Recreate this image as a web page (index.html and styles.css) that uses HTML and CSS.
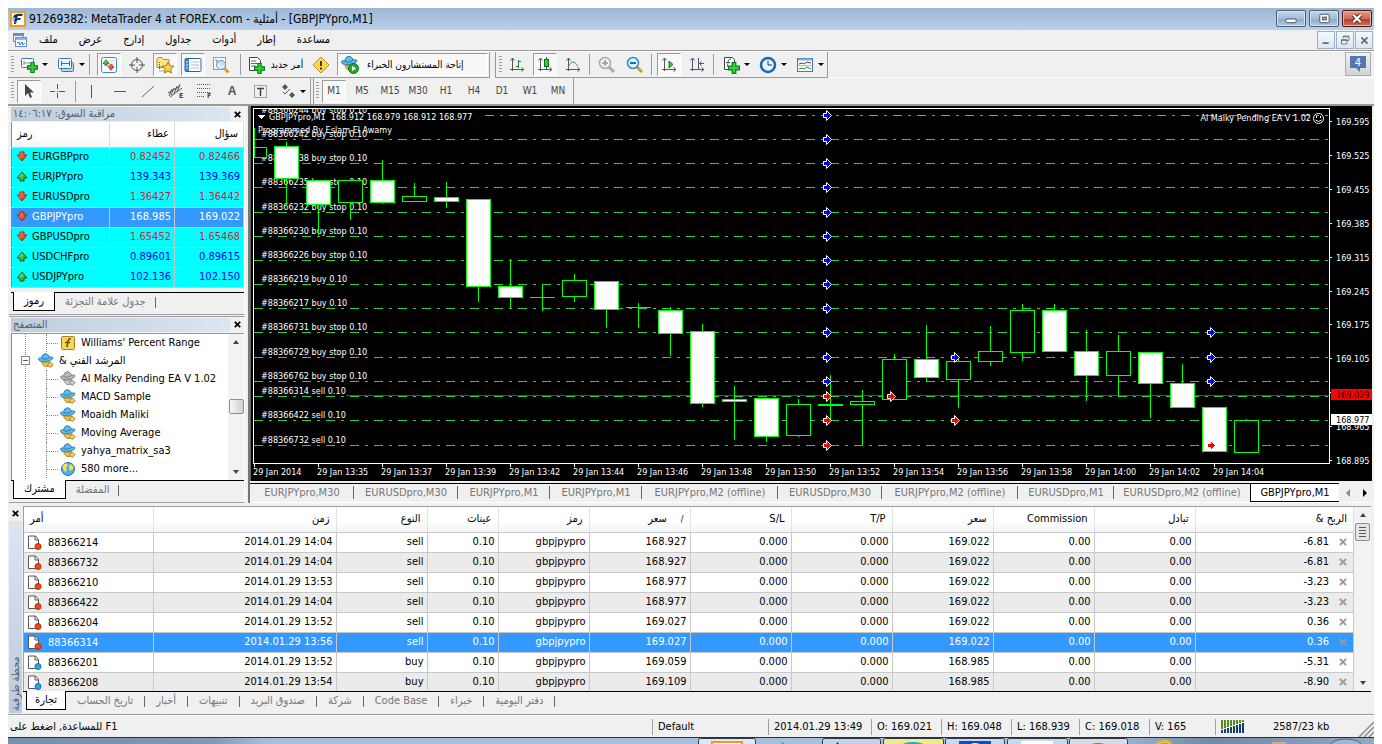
FILE: index.html
```html
<!DOCTYPE html>
<html lang="ar" dir="ltr">
<head>
<meta charset="utf-8">
<title>91269382: MetaTrader 4 at FOREX.com</title>
<link rel="stylesheet" href="styles.css">
</head>
<body>
<svg class="defs" aria-hidden="true">
  <defs>
    <linearGradient id="gRed" x1="0" y1="0" x2="1" y2="1"><stop offset="0" stop-color="#ff9a70"/><stop offset="1" stop-color="#d02000"/></linearGradient>
    <linearGradient id="gGreen" x1="0" y1="0" x2="1" y2="1"><stop offset="0" stop-color="#8cf08c"/><stop offset="1" stop-color="#109a20"/></linearGradient>
  </defs>
  <symbol id="down" viewBox="0 0 12 11"><path d="M4 1h4v3h3L6 10 1 4h3z" fill="url(#gRed)" stroke="#a02810"/></symbol>
  <symbol id="up" viewBox="0 0 12 11"><path d="M4 10h4V7h3L6 1 1 7h3z" fill="url(#gGreen)" stroke="#106018"/></symbol>
  <symbol id="hat" viewBox="0 0 17 16"><path d="M4 5c0-6 7-6 8-1 4-1 5 1 3 2-3 3-10 3-13 2C-1 6 1 4 4 5z" fill="#5cbcec" stroke="#2777a8"/><path d="M4 5c2 2 6 1 8-1" fill="none" stroke="#256f9e"/><path d="M4 9c1 5 5 6 8 4V8.500c-3 1-5 1-8 .5z" fill="#e6c25c" stroke="#a88020"/><path d="M13 9l3 3-3 3-3-3z" fill="#f6cf55" stroke="#a07a18"/></symbol>
  <symbol id="hatgray" viewBox="0 0 17 16"><path d="M4 5c0-6 7-6 8-1 4-1 5 1 3 2-3 3-10 3-13 2C-1 6 1 4 4 5z" fill="#bbb" stroke="#777"/><path d="M4 5c2 2 6 1 8-1" fill="none" stroke="#777"/><path d="M4 9c1 5 5 6 8 4V8.500c-3 1-5 1-8 .5z" fill="#ccc" stroke="#888"/><path d="M13 9l3 3-3 3-3-3z" fill="#ccc" stroke="#777"/></symbol>
  <symbol id="docred" viewBox="0 0 15 15"><path d="M1.500 1h7l3 3.500v9h-10z" fill="#fff" stroke="#555"/><path d="M8 1v4h4" fill="none" stroke="#555"/><circle cx="11" cy="11.500" r="3" fill="#ee4a18" stroke="#b52c08"/></symbol>
  <symbol id="docblue" viewBox="0 0 15 15"><path d="M1.500 1h7l3 3.500v9h-10z" fill="#fff" stroke="#555"/><path d="M8 1v4h4" fill="none" stroke="#555"/><circle cx="11" cy="11.500" r="3" fill="#28a4e8" stroke="#1070b0"/></symbol>
  <symbol id="plus" viewBox="0 0 10 10"><path d="M3.500.5h3v3h3v3h-3v3h-3v-3h-3v-3h3z" fill="#2fd53a" stroke="#0b7d18"/></symbol>
  <symbol id="axes" viewBox="0 0 16 16"><path d="M3.500 1.500V14M1.500 3.500l2-2.500 2 2.500M1 12.500h13M12.500 10.500l2.500 2-2.500 2" fill="none" stroke="#555"/></symbol>
  <symbol id="cross" viewBox="0 0 9 9"><path d="M1 1l7 7M8 1L1 8" stroke="currentColor" stroke-width="2.200"/></symbol>
</svg>
<div class="window">
  <header class="titlebar">
    <svg class="i16" viewBox="0 0 16 16"><rect x="1" y="1" width="14" height="14" fill="#fff" stroke="#f79a1c" stroke-width="2"/><path d="M3 6c1-3 4-4 10-3l-1 2H8L7 7h4l-1 2H7l-1 4H4c0-3 0-4 1-6z" fill="#12365f"/><path d="M3 6c0 3 1 5 3 6" stroke="#6c8fb5" fill="none"/></svg>
    <h1>91269382: MetaTrader 4 at FOREX.com - أمثلية - [GBPJPYpro,M1]</h1>
    <div class="winbtns">
      <button aria-label="Minimize"><svg viewBox="0 0 30 16"><rect x="9.500" y="8.500" width="11" height="4" rx="1" fill="#fff" stroke="#444b58"/></svg></button>
      <button aria-label="Restore"><svg viewBox="0 0 30 16"><rect x="10.500" y="3.500" width="10" height="9" rx="1" fill="#fff" stroke="#444b58"/><rect x="13.500" y="6.500" width="4" height="3" fill="#8fb0d4" stroke="#444b58"/></svg></button>
      <button class="close" aria-label="Close"><svg viewBox="0 0 30 16"><path d="M11 4l8 8m0-8l-8 8" stroke="#4d2525" stroke-width="4.500"/><path d="M11 4l8 8m0-8l-8 8" stroke="#fff" stroke-width="2.500"/></svg></button>
    </div>
  </header>

  <nav class="menubar">
    <svg class="i16" viewBox="0 0 16 16"><rect x="1.500" y="1.500" width="10" height="8" fill="#fff" stroke="#5b93d8"/><path d="M2 3h9" stroke="#5b93d8" stroke-width="2"/><rect x="3.500" y="5.500" width="11" height="9" fill="#fff" stroke="#5b93d8"/><path d="M4 7h10" stroke="#8bb8ee" stroke-width="2"/><path d="M5 11l2-1 1 3 2-3 1 3 2-2" fill="none" stroke="#3a76c4"/></svg>
    <button>ملف</button><button>عرض</button><button>إدارج</button><button>جداول</button><button>أدوات</button><button>إطار</button><button>مساعدة</button>
    <div class="mdibtns">
      <button aria-label="Minimize chart"><svg viewBox="0 0 18 18"><path d="M5 12.500h7" stroke="#5f7186" stroke-width="2"/></svg></button>
      <button aria-label="Restore chart"><svg viewBox="0 0 18 18"><path d="M7 7V4.500h6.500v5H11M7 5.500h6" fill="none" stroke="#5f7186"/><path d="M5 8.500h6v5H5zM5 9.500h6" fill="none" stroke="#5f7186"/></svg></button>
      <button aria-label="Close chart"><svg viewBox="0 0 18 18"><path d="M6 6l7 7m0-7l-7 7" stroke="#5f7186" stroke-width="2"/></svg></button>
    </div>
  </nav>

  <div class="toolbar">
    <div class="tools">
      <span class="grip"></span>
      <button class="drop" aria-label="New chart"><svg class="i18" viewBox="0 0 18 18"><rect x="1.500" y="2.500" width="12" height="9" rx="1" fill="#fff" stroke="#3679ae"/><path d="M4 5v4M4 7h7" stroke="#888"/><use href="#plus" x="7" y="6" width="11" height="11"/></svg><i class="caret"></i></button>
      <button class="drop" aria-label="Profiles"><svg class="i18" viewBox="0 0 18 18"><rect x="4.500" y="6.500" width="12" height="9" rx="1" fill="#b9d8f0" stroke="#3679ae"/><rect x="1.500" y="2.500" width="13" height="10" rx="1" fill="#e8f4ff" stroke="#3679ae"/><path d="M4.500 5v5M12.500 5v5M4 7.500h8" stroke="#666"/></svg><i class="caret"></i></button>
      <span class="sep first"></span>
      <button class="on" aria-label="Market watch"><svg class="i16" viewBox="0 0 16 16"><rect x=".5" y=".5" width="15" height="15" rx="2" fill="#fff" stroke="#3a86d0"/><path d="M9 4h5M9 7h5" stroke="#ccc"/><use href="#up" x="1" y="2" width="8" height="7"/><use href="#down" x="6" y="7" width="8" height="7"/></svg></button>
      <button aria-label="Data window"><svg class="i16" viewBox="0 0 16 16"><circle cx="8" cy="8" r="5.500" fill="none" stroke="#555"/><path d="M8 0v6M8 10v6M0 8h6M10 8h6" stroke="#555"/></svg></button>
      <button class="on" aria-label="Navigator"><svg class="i18" viewBox="0 0 18 18"><path d="M1 2.500l1-1h4l1.500 2H13v8H1z" fill="#ffe48a" stroke="#b98e18"/><path d="M3.500 6v8m0-3h5m-5 4h5" stroke="#555" stroke-dasharray="1 1"/><path d="M12 6l1.800 3.600 4 .6-3 2.800.7 4-3.500-2-3.500 2 .7-4-3-2.800 4-.6z" fill="#ffd24a" stroke="#a37710"/></svg></button>
      <button class="on" aria-label="Terminal"><svg class="i18" viewBox="0 0 18 18"><rect x="1" y="2.500" width="16" height="13" rx="1" fill="#fff" stroke="#2468a8"/><rect x="1" y="3" width="4" height="12" fill="#377fd0"/><path d="M7 6h8M7 9h8M7 12h8" stroke="#b4bcc8"/><path d="M2 6h2M2 9h2M2 12h2" stroke="#fff"/></svg></button>
      <button aria-label="Strategy tester"><svg class="i18" viewBox="0 0 18 18"><rect x="1.500" y="1.500" width="12" height="12" fill="#fff" stroke="#9a9a9a"/><path d="M3 4h2v3h2V5h2v4h2V5" fill="none" stroke="#777"/><circle cx="9" cy="9" r="4.500" fill="#cfe9fb" fill-opacity=".8" stroke="#5a9bc8"/><path d="M12.500 12.500l4 4" stroke="#d8a320" stroke-width="3"/></svg></button>
      <span class="sep"></span>
      <button class="order"><svg class="i18" viewBox="0 0 18 18"><path d="M2.500 1.500h8l3 3v10h-11z" fill="#fff" stroke="#444"/><path d="M4 5h5M4 7.500h7M4 10h5" stroke="#666"/><use href="#plus" x="7" y="7" width="11" height="11"/></svg><span>أمر جديد</span></button>
      <button aria-label="MetaEditor"><svg class="i18" viewBox="0 0 18 18"><path d="M9 1l8 8-8 8-8-8z" fill="#ffd94a" stroke="#c29312"/><path d="M9 5v5M9 11.500v2" stroke="#443a10" stroke-width="2"/></svg></button>
      <button class="on experts"><svg class="i18" viewBox="0 0 18 18"><use href="#hat" x="0" y="0" width="17" height="16"/><circle cx="12.500" cy="12.500" r="5" fill="#29a736" stroke="#116d1c"/><path d="M11 10l4 2.500-4 2.500z" fill="#fff"/></svg><span dir="rtl">إتاحة المستشارون الخبراء</span></button>
    </div>
    <div class="tools charts">
      <span class="grip"></span>
      <button aria-label="Bar chart"><svg class="i16" viewBox="0 0 16 16"><use href="#axes" width="16" height="16"/><path d="M9.500 3v8M9 4.500h3M7 9.500h2.500" stroke="#1d8c24" fill="none"/></svg></button>
      <button class="on" aria-label="Candlesticks"><svg class="i16" viewBox="0 0 16 16"><use href="#axes" width="16" height="16"/><path d="M9.500 0v12" stroke="#0b6c14"/><rect x="7.500" y="2.500" width="4" height="7" fill="#2ed33a" stroke="#0b6c14"/></svg></button>
      <button aria-label="Line chart"><svg class="i16" viewBox="0 0 16 16"><use href="#axes" width="16" height="16"/><path d="M3 10c4-7 6-6 10-1" stroke="#2f9c38" fill="none"/></svg></button>
      <span class="sep"></span>
      <button aria-label="Zoom in"><svg class="i18" viewBox="0 0 18 18"><path d="M11 11l5 5" stroke="#aaa" stroke-width="3"/><circle cx="7" cy="7" r="5.500" fill="#f2f2f2" stroke="#aaa" stroke-width="1.500"/><path d="M4 7h6M7 4v6" stroke="#999" stroke-width="1.500"/></svg></button>
      <button aria-label="Zoom out"><svg class="i18" viewBox="0 0 18 18"><path d="M11 11l5 5" stroke="#caa224" stroke-width="3"/><circle cx="7" cy="7" r="5.500" fill="#dff3ff" stroke="#2a8ad0" stroke-width="1.500"/><path d="M4 7h6" stroke="#1b6fae" stroke-width="2"/></svg></button>
      <span class="sep"></span>
      <button class="on" aria-label="Auto scroll"><svg class="i16" viewBox="0 0 16 16"><use href="#axes" width="16" height="16"/><path d="M8 4l4 3.500-4 3.500z" fill="#35c83f" stroke="#0f7d1a"/></svg></button>
      <button aria-label="Chart shift"><svg class="i16" viewBox="0 0 16 16"><use href="#axes" width="16" height="16"/><path d="M9.500 1v12" stroke="#1c5fae"/><path d="M15 6.500h-5M12.500 4.500l-2 2 2 2" stroke="#c03a10" fill="none"/></svg></button>
      <span class="sep"></span>
      <button class="drop" aria-label="Indicators"><svg class="i18" viewBox="0 0 18 18"><path d="M2.500 1.500h8l2 2v10h-10z" fill="#fff" stroke="#444"/><path d="M9 3C5 3 7 6 5 11M4 6.500h4" stroke="#555" fill="none"/><use href="#plus" x="6" y="6" width="12" height="12"/></svg><i class="caret"></i></button>
      <button class="drop" aria-label="Periods"><svg class="i18" viewBox="0 0 18 18"><circle cx="9" cy="9" r="7" fill="#eaf5ff" stroke="#1c66b8" stroke-width="2.500"/><path d="M9 4.500V9h4" stroke="#333" fill="none"/></svg><i class="caret"></i></button>
      <button class="drop" aria-label="Templates"><svg class="i18" viewBox="0 0 18 18"><rect x="1.500" y="2.500" width="15" height="13" fill="#fff" stroke="#3a7cb8"/><path d="M2 3.500h14" stroke="#6fb3ee" stroke-width="2"/><path d="M3 8l3-1 2 1 3-2 4 1" stroke="#8a2d14" fill="none"/><path d="M2 9.500h14" stroke="#bbb"/><path d="M3 13l3-1 2 1 3-2 4 2" stroke="#268a32" fill="none"/></svg><i class="caret"></i></button>
    </div>
    <button class="chat" aria-label="4 messages"><svg viewBox="0 0 20 18"><path d="M2 1h16v12h-6v4l-4-4H2z" fill="#5477ad"/><text x="10" y="11" text-anchor="middle" class="chatnum">4</text></svg></button>
  </div>

  <div class="toolbar second">
    <div class="tools">
      <span class="grip"></span>
      <button class="on" aria-label="Cursor"><svg class="i16" viewBox="0 0 16 16"><path d="M4 1v12l3-3 2 5 2-1-2-4.500h4z" fill="#444"/></svg></button>
      <button aria-label="Crosshair"><svg class="i16" viewBox="0 0 16 16"><path d="M8.500 1v5M8.500 10v5M1 8.500h5M10 8.500h6M8 8.500h1" stroke="#555"/></svg></button>
      <span class="sep"></span>
      <button aria-label="Vertical line"><svg class="i16" viewBox="0 0 16 16"><path d="M7.500 2v13" stroke="#555"/></svg></button>
      <button aria-label="Horizontal line"><svg class="i16" viewBox="0 0 16 16"><path d="M2 8.500h12" stroke="#555"/></svg></button>
      <button aria-label="Trendline"><svg class="i16" viewBox="0 0 16 16"><path d="M2 14L14 3" stroke="#666"/></svg></button>
      <button aria-label="Channel"><svg class="i18" viewBox="0 0 18 18"><path d="M1 11L13 4M3 15L15 6M4 13l3-7M7 12l3-8M10 10l3-8M2 14l3-7" stroke="#555"/><text x="12" y="16" class="mini">E</text></svg></button>
      <button aria-label="Fibonacci"><svg class="i18" viewBox="0 0 18 18"><path d="M2 2.500h13M2 6.500h13M2 10.500h13M2 14.500h8" stroke="#555" stroke-dasharray="1 1"/><text x="12" y="16" class="mini">F</text></svg></button>
      <button class="letter" aria-label="Text">A</button>
      <button aria-label="Text label"><svg class="i16" viewBox="0 0 16 16"><rect x="2.500" y="2.500" width="12" height="12" fill="none" stroke="#555" stroke-dasharray="1 1"/><path d="M5 5.500h7M8.500 5v8" stroke="#444" stroke-width="1.500"/></svg></button>
      <button class="drop" aria-label="Arrows"><svg class="i16" viewBox="0 0 16 16"><path d="M5 1l3 3-3 3-3-3zM12 9l3 3-3 3-3-3z" fill="#555"/><path d="M3 9l2 2 5-5" stroke="#555" fill="none"/></svg><i class="caret"></i></button>
    </div>
    <div class="tools periods">
      <span class="grip"></span>
      <button class="on">M1</button><button>M5</button><button>M15</button><button>M30</button><button>H1</button><button>H4</button><button>D1</button><button>W1</button><button>MN</button>
    </div>
  </div>

  <main class="work">
    <aside class="side">
      <section class="panel">
        <div class="phead"><h2 dir="rtl">مراقبة السوق: ١٤:٠٦:١٧</h2><button aria-label="Close market watch"><svg><use href="#cross"/></svg></button></div>
        <table class="watch">
          <thead><tr><th>رمز</th><th>عطاء</th><th>سؤال</th></tr></thead>
          <tbody>
            <tr class="dn"><td><svg><use href="#down"/></svg>EURGBPpro</td><td>0.82452</td><td>0.82466</td></tr>
            <tr class="upr"><td><svg><use href="#up"/></svg>EURJPYpro</td><td>139.343</td><td>139.369</td></tr>
            <tr class="dn"><td><svg><use href="#down"/></svg>EURUSDpro</td><td>1.36427</td><td>1.36442</td></tr>
            <tr class="sel"><td><svg><use href="#down"/></svg>GBPJPYpro</td><td>168.985</td><td>169.022</td></tr>
            <tr class="dn"><td><svg><use href="#down"/></svg>GBPUSDpro</td><td>1.65452</td><td>1.65468</td></tr>
            <tr class="upr"><td><svg><use href="#up"/></svg>USDCHFpro</td><td>0.89601</td><td>0.89615</td></tr>
            <tr class="upr"><td><svg><use href="#up"/></svg>USDJPYpro</td><td>102.136</td><td>102.150</td></tr>
          </tbody>
        </table>
        <div class="tabs"><button class="cur">رموز</button><button>جدول علامة التجزئة</button></div>
      </section>
      <section class="panel nav">
        <div class="phead"><h2>المتصفح</h2><button aria-label="Close navigator"><svg><use href="#cross"/></svg></button></div>
        <div class="treebox">
          <ul class="tree">
            <li><svg class="i16" viewBox="0 0 16 16"><rect x="1.500" y="1.500" width="13" height="13" rx="1" fill="#f7d558" stroke="#a8801c"/><path d="M11 4c-3-1-3 2-4 8M5 7.500h5" stroke="#6b4d08" stroke-width="1.500" fill="none"/></svg>Williams' Percent Range</li>
            <li class="root"><i class="minus"></i><svg class="i16"><use href="#hat"/></svg><span dir="rtl">المرشد الفني &amp;</span></li>
            <li><svg class="i16"><use href="#hatgray"/></svg>Al Malky Pending EA V 1.02</li>
            <li><svg class="i16"><use href="#hat"/></svg>MACD Sample</li>
            <li><svg class="i16"><use href="#hat"/></svg>Moaidh Maliki</li>
            <li><svg class="i16"><use href="#hat"/></svg>Moving Average</li>
            <li><svg class="i16"><use href="#hat"/></svg>yahya_matrix_sa3</li>
            <li><svg class="i16" viewBox="0 0 16 16"><circle cx="8" cy="8" r="6.500" fill="#4fb0ee" stroke="#2a6cae"/><path d="M3 4c2-2 4-2 5 0l-2 3 1 2-2 2C3 9 2 6 3 4zM10 3l3 2v3l-3 2-1-3z" fill="#f4e252"/></svg>580 more...</li>
          </ul>
          <div class="scroll"><i class="su"></i><b></b><i class="sd"></i></div>
        </div>
        <div class="tabs"><button class="cur">مشترك</button><button>المفضلة</button></div>
      </section>
    </aside>
    <section class="chartpane">
      <svg id="chart" viewBox="250 106 1122 375" role="img" aria-label="GBPJPYpro,M1"></svg>
      <div class="charttabs">
        <button>EURJPYpro,M30</button><button>EURUSDpro,M30</button><button>EURJPYpro,M1</button><button>EURJPYpro,M1</button><button>EURJPYpro,M2 (offline)</button><button>EURUSDpro,M30</button><button>EURJPYpro,M2 (offline)</button><button>EURUSDpro,M1</button><button>EURUSDpro,M2 (offline)</button><button class="cur">GBPJPYpro,M1</button>
        <div class="tabnav"><i class="tl"></i><i class="tr"></i></div>
      </div>
    </section>
  </main>

  <section class="terminal">
    <div class="gutter"><button aria-label="Close terminal"><svg><use href="#cross"/></svg></button><h2>محطة طرفية</h2></div>
    <div class="termbody">
      <div class="orderbox">
        <table class="orders">
          <colgroup><col class="c1"><col class="c2"><col class="c3"><col class="c4"><col class="c3"><col class="c5"><col class="c5"><col class="c5"><col class="c5"><col class="c5"><col class="c5"><col></colgroup>
          <thead><tr><th>أمر</th><th>زمن</th><th>النوع</th><th>عينات</th><th>رمز</th><th class="sorted">سعر<span>/</span></th><th>S/L</th><th>T/P</th><th>سعر</th><th>Commission</th><th>تبادل</th><th dir="rtl">الربح &amp;</th></tr></thead>
          <tbody>
            <tr><td><svg><use href="#docred"/></svg>88366214</td><td>2014.01.29 14:04</td><td>sell</td><td>0.10</td><td>gbpjpypro</td><td>168.927</td><td>0.000</td><td>0.000</td><td>169.022</td><td>0.00</td><td>0.00</td><td>-6.81<button aria-label="Close order"><svg><use href="#cross"/></svg></button></td></tr>
            <tr><td><svg><use href="#docred"/></svg>88366732</td><td>2014.01.29 14:04</td><td>sell</td><td>0.10</td><td>gbpjpypro</td><td>168.927</td><td>0.000</td><td>0.000</td><td>169.022</td><td>0.00</td><td>0.00</td><td>-6.81<button aria-label="Close order"><svg><use href="#cross"/></svg></button></td></tr>
            <tr><td><svg><use href="#docred"/></svg>88366210</td><td>2014.01.29 13:53</td><td>sell</td><td>0.10</td><td>gbpjpypro</td><td>168.977</td><td>0.000</td><td>0.000</td><td>169.022</td><td>0.00</td><td>0.00</td><td>-3.23<button aria-label="Close order"><svg><use href="#cross"/></svg></button></td></tr>
            <tr><td><svg><use href="#docred"/></svg>88366422</td><td>2014.01.29 14:04</td><td>sell</td><td>0.10</td><td>gbpjpypro</td><td>168.977</td><td>0.000</td><td>0.000</td><td>169.022</td><td>0.00</td><td>0.00</td><td>-3.23<button aria-label="Close order"><svg><use href="#cross"/></svg></button></td></tr>
            <tr><td><svg><use href="#docred"/></svg>88366204</td><td>2014.01.29 13:52</td><td>sell</td><td>0.10</td><td>gbpjpypro</td><td>169.027</td><td>0.000</td><td>0.000</td><td>169.022</td><td>0.00</td><td>0.00</td><td>0.36<button aria-label="Close order"><svg><use href="#cross"/></svg></button></td></tr>
            <tr class="sel"><td><svg><use href="#docred"/></svg>88366314</td><td>2014.01.29 13:56</td><td>sell</td><td>0.10</td><td>gbpjpypro</td><td>169.027</td><td>0.000</td><td>0.000</td><td>169.022</td><td>0.00</td><td>0.00</td><td>0.36<button aria-label="Close order"><svg><use href="#cross"/></svg></button></td></tr>
            <tr><td><svg><use href="#docblue"/></svg>88366201</td><td>2014.01.29 13:52</td><td>buy</td><td>0.10</td><td>gbpjpypro</td><td>169.059</td><td>0.000</td><td>0.000</td><td>168.985</td><td>0.00</td><td>0.00</td><td>-5.31<button aria-label="Close order"><svg><use href="#cross"/></svg></button></td></tr>
            <tr><td><svg><use href="#docblue"/></svg>88366208</td><td>2014.01.29 13:54</td><td>buy</td><td>0.10</td><td>gbpjpypro</td><td>169.109</td><td>0.000</td><td>0.000</td><td>168.985</td><td>0.00</td><td>0.00</td><td>-8.90<button aria-label="Close order"><svg><use href="#cross"/></svg></button></td></tr>
          </tbody>
        </table>
        <div class="scroll wide"><i class="su"></i><b class="lined"></b><i class="sd"></i></div>
      </div>
      <div class="tabs"><button class="cur">تجارة</button><button>تاريخ الحساب</button><button>أخبار</button><button>تنبيهات</button><button>صندوق البريد</button><button>شركة</button><button>Code Base</button><button>خبراء</button><button>دفتر اليومية</button></div>
    </div>
  </section>

  <footer class="status">
    <span class="help" dir="rtl">F1 للمساعدة, اضغط على</span>
    <span class="s-prof">Default</span><span class="s-time">2014.01.29 13:49</span><span class="s-o">O: 169.021</span><span class="s-o">H: 169.048</span><span class="s-l">L: 168.939</span><span class="s-o">C: 169.018</span><span class="s-v">V: 165</span>
    <span class="s-net"><svg viewBox="0 0 24 13"><path d="M1 0v9M4 0v8M7 0v7M10 0v6M13 0v5M16 0v4M19 0v3M22 0v2" stroke="#5a8a1c" stroke-width="2"/><path d="M1 10v3M4 9v4M7 8v5M10 7v6M13 6v7M16 5v8M19 4v9M22 3v10" stroke="#12406a" stroke-width="2"/></svg>2587/23 kb</span>
    <svg class="size" viewBox="0 0 16 18"><path d="M1 18L16 3M6 18l10-10M11 18l5-5" stroke="#8c8c8c" stroke-width="1.500"/></svg>
  </footer>
</div>

<div class="taskbar">
  <svg viewBox="0 0 1366 7" preserveAspectRatio="xMinYMin meet" aria-hidden="true">
    <g stroke="#303c4c" fill="#dfe7f0"><rect x="690.500" y=".5" width="57" height="9" rx="2"/><rect x="814.500" y=".5" width="58" height="9" rx="2" fill="#c4d3e6"/><rect x="875.500" y=".5" width="60" height="9" rx="2" fill="#f2ea86"/><rect x="937.500" y=".5" width="59" height="9" rx="2" fill="#c9d8ea"/><rect x="999.500" y=".5" width="60" height="9" rx="2" fill="#c9d8ea"/><rect x="1061.500" y=".5" width="58" height="9" rx="2" fill="#d3dde9"/></g>
    <rect x="704" y="4" width="30" height="6" fill="#fff" stroke="#f79a1c" stroke-width="2"/>
    <path d="M773 4l6 3h-4z" fill="#2b8fc0"/><path d="M827 7l3-3 1 3z" fill="#223"/>
    <ellipse cx="905" cy="8" rx="12" ry="4" fill="#25a7dc"/><rect x="951" y="3" width="32" height="5" fill="#0b4fc4"/><ellipse cx="967" cy="8" rx="6" ry="3" fill="#eef4ff"/>
    <rect x="1013" y="3" width="32" height="5" fill="#fff"/><ellipse cx="1090" cy="9" rx="10" ry="4" fill="#e04a42"/><path d="M1148 7c4-4 12-5 15-1" stroke="#e8be28" stroke-width="3" fill="none"/>
    <rect x="1264" y="4" width="14" height="4" fill="#c6b27a"/><ellipse cx="1338" cy="8" rx="16" ry="7" fill="#9fb6d2" stroke="#4c6585"/>
  </svg>
</div>
<script src="chart.js"></script>
</body>
</html>
```

FILE: styles.css
```css
* { box-sizing: border-box; }
body {
  margin: 0; padding: 8px 8px 0; min-height: 100vh; background: #fff; color: #000;
  font: 11px/14px "DejaVu Sans Condensed", "DejaVu Sans", "Noto Sans", sans-serif;
  display: flex; flex-direction: column; overflow: hidden;
}
button { font: inherit; color: inherit; background: none; border: 0; padding: 0; margin: 0; }
h1, h2 { margin: 0; font: inherit; }
ul { margin: 0; padding: 0; list-style: none; }
svg { display: block; flex: none; }
.defs { position: absolute; width: 0; height: 0; }
.i16 { width: 16px; height: 16px; }
.i18 { width: 18px; height: 18px; }
.window { background: #f0f0f0; }

.titlebar { height: 22px; display: flex; align-items: center; padding: 0 2px; background: linear-gradient(#9db8d5, #b9d0eb); }
.titlebar h1 { margin-left: 3px; font-size: 12px; flex: 1; }
.winbtns { display: flex; gap: 3px; align-self: flex-start; padding-top: 2px; }
.winbtns button { width: 30px; height: 17px; border: 1px solid #4c5f78; border-radius: 2px; background: linear-gradient(#c4d6ea, #a5bdd9 50%, #8ba9ca 52%, #b3cae4); box-shadow: inset 0 0 0 1px #d3e1f1; }
.winbtns .close { border-color: #4d1710; background: linear-gradient(#e0a090, #cf6b56 50%, #b93a24 52%, #d0705a); box-shadow: inset 0 0 0 1px #e9b3a8; }
.winbtns svg { width: 28px; height: 15px; }

.menubar { height: 21px; display: flex; align-items: center; padding: 0 1px 0 4px; border-bottom: 1px solid #9a9a9a; }
.menubar > button { margin-left: 21px; }
.menubar > svg + button { margin-left: 11px; }
.mdibtns { margin-left: auto; display: flex; gap: 1px; }
.mdibtns button { width: 18px; height: 18px; border: 1px solid #9fb0c4; background: linear-gradient(#f4f8fc, #dce7f3); }
.mdibtns svg { width: 16px; height: 16px; }

.toolbar { display: flex; height: 26px; border-top: 1px solid #fff; }
.tools { display: flex; align-items: center; height: 26px; padding: 0 1px; border-right: 1px solid #9a9a9a; border-bottom: 1px solid #9a9a9a; gap: 4px; }
.tools + .tools { margin-left: 5px; border-left: 1px solid #9a9a9a; }
.grip { width: 3px; height: 18px; margin: 0 -1px 0 2px; background: repeating-linear-gradient(#a0a0a0 0 1px, #f0f0f0 1px 3px); }
.sep { width: 1px; height: 21px; background: #9a9a9a; margin: 0 0 0 3px; }
.sep.first { margin: 0 3px 0 -2px; }
.charts .sep { margin: 0 1px 0 0; }
.second .sep { margin: 0 0 0 2px; }
.tools button { width: 24px; height: 23px; display: flex; align-items: center; justify-content: center; }
.tools .on { background: #f8f8f8; border: 1px solid #fff; border-top-color: #9a9a9a; border-left-color: #9a9a9a; }
.tools .drop { width: 33px; gap: 4px; }
.caret { border: 3px solid transparent; border-top-color: #000; border-bottom: 0; width: 0; height: 0; flex: none; }
.tools .order { width: 60px; gap: 6px; font-size: 10px; white-space: nowrap; }
.tools .experts { width: 151px; gap: 8px; justify-content: flex-start; padding-left: 3px; font-size: 10px; white-space: nowrap; }
.chat { margin: 0 3px 0 auto; width: 26px; height: 24px; border: 1px solid #adadad; background: linear-gradient(#f2f2f2, #d2d2d2); padding: 2px; }
.chat svg { width: 20px; height: 18px; }
.chatnum { font-size: 11px; fill: #fff; }
.second { height: 29px; border-bottom: 2px solid #9a9a9a; border-top: 1px solid #fff; }
.second .tools { height: 26px; border-bottom: 0; }
.mini { font-size: 7px; font-weight: bold; fill: #444; }
.letter { font: bold 12px/14px "Liberation Sans", sans-serif; color: #555; }
.periods { font-size: 10px; color: #444; }
.tools + .periods { margin-left: 2px; padding-right: 3px; }
.tools.periods .grip { margin-left: 1px; }

.work { display: flex; align-items: stretch; }
.side { width: 242px; flex: none; padding: 0 3px 0 1px; display: flex; flex-direction: column; gap: 1px; border-right: 2px solid #777; }
.panel { display: flex; flex-direction: column; padding-left: 2px; border-right: 1px solid #fff; border-bottom: 1px solid #a0a0a0; }
.nav { flex: 1; border-top: 1px solid #a0a0a0; }
.phead { display: flex; align-items: center; height: 16px; }
.phead h2 { flex: 1; text-align: left; padding-left: 2px; color: #54606c; background: linear-gradient(90deg, #bfcddb, #dae6f2); }
.phead button, .gutter button { width: 14px; display: grid; place-items: center; }
.phead button svg, .gutter button svg { width: 7px; height: 7px; }
.watch { border-collapse: collapse; width: 100%; table-layout: fixed; border-left: 1px solid #888; }
.watch th { height: 25px; background: linear-gradient(#fff 55%, #f1f3f5); border: 0; border-right: 1px solid #ddd; border-bottom: 1px solid #ccc; text-align: right; padding: 0 5px; font-weight: normal; }
.watch th:first-child { text-align: left; width: 98px; }
.watch th:last-child { width: 69px; }
.watch td { height: 20px; padding: 0 3px; text-align: right; background: #0ff; border-right: 1px solid #c0c8c8; border-bottom: 1px solid #c0c8c8; }
.watch td:first-child { text-align: left; padding-left: 4px; }
.watch td svg { display: inline-block; width: 12px; height: 11px; margin-right: 4px; vertical-align: -2px; }
.dn td + td { color: #e0103c; }
.upr td + td { color: #0000f0; }
.watch .sel td { background: #39f; color: #fff; }
.tabs { display: flex; align-items: flex-start; border-top: 1px solid #000; height: 22px; padding-left: 2px; color: #777; }
.watch + .tabs { margin-top: 4px; }
.tabs button { height: 18px; padding: 0 10px; white-space: nowrap; background: linear-gradient(#666, #666) right 4px / 1px 11px no-repeat; }
.tabs .cur { margin-top: -1px; height: 19px; background: #fff; color: #000; border: 1px solid #000; border-top: 0; }
.termbody .tabs { padding-left: 3px; }
.termbody .tabs button { padding: 0 12px 0 11px; }
.termbody .tabs .cur { padding: 0 8px; }
.treebox { display: flex; flex: 1; background: #fff; border-top: 1px solid #999; border-left: 1px solid #888; }
.tree { flex: 1; padding: 0 0 2px 14px; background: repeating-linear-gradient(#888 0 1px, #fff 1px 2px) 13px 0 / 1px 100% no-repeat; }
.tree li { height: 18px; display: flex; align-items: center; gap: 5px; padding-left: 20px; white-space: nowrap; }
.tree li::before { content: ""; width: 12px; height: 18px; margin-right: -4px; border-left: 1px dotted #888; background: repeating-linear-gradient(90deg, #888 0 1px, #fff 1px 2px) 0 9px / 12px 1px no-repeat; }
.tree .root { padding-left: 0; gap: 5px; }
.tree .root::before { display: none; }
.minus { width: 9px; height: 9px; margin-left: -5px; margin-right: 3px; border: 1px solid #888; background: linear-gradient(#36c, #36c) center / 5px 1px no-repeat #fff; }
.scroll { width: 16px; display: flex; flex-direction: column; align-items: center; justify-content: space-between; padding: 6px 0; background: #f2f2f2; }
.scroll i { border: 3px solid transparent; width: 0; height: 0; }
.scroll .su { border-bottom: 4px solid #444; border-top: 0; }
.scroll .sd { border-top: 4px solid #444; border-bottom: 0; }
.scroll b { width: 15px; height: 15px; border: 1px solid #8f8f8f; border-radius: 2px; background: linear-gradient(90deg, #f6f6f6, #d0d0d0); }
.scroll.wide { width: 17px; justify-content: flex-start; }
.wide b { height: 18px; margin-top: 6px; }
.wide .sd { margin-top: auto; }
.scroll.wide .lined { background: repeating-linear-gradient(#555 0 1px, #e4e4e4 1px 3px) center / 7px 10px no-repeat #e4e4e4; }

.chartpane { flex: 1; min-width: 0; }
#chart { width: calc(100% - 2px); height: auto; background: #000; font-size: 9px; fill: #fff; }
#chart path, #chart rect { shape-rendering: crispEdges; }
#chart .arrow { shape-rendering: auto; }
.level { stroke: #32cd32; stroke-dasharray: 9 6 3 6; }
.candle { stroke: #0f0; }
.axis { stroke: #fff; fill: none; }
.ask { stroke: #f00; }
#chart .dark { fill: #000; }
.charttabs { display: grid; grid-template-columns: 104fr 104fr 92fr 92fr 136fr 104fr 136fr 96fr 136fr 89fr 35fr; height: 20px; margin-top: 2px; border-bottom: 1px solid #fff; color: #777; }
.charttabs button { border-top: 1px solid #000; white-space: nowrap; background: linear-gradient(#666, #666) right 2px / 1px 13px no-repeat; }
.charttabs button:nth-child(9) { background: none; }
.charttabs .cur { background: #fff; color: #000; border: 1px solid #000; border-right: 0; }
.tabnav { display: flex; align-items: center; justify-content: space-around; }
.tabnav i { border: 4px solid transparent; width: 0; height: 0; }
.tabnav .tl { border-left: 0; border-right-color: #888; }
.tabnav .tr { border-right: 0; border-left-color: #000; }

.terminal { display: flex; margin-top: 3px; padding-bottom: 1px; padding-right: 3px; border-bottom: 1px solid #9a9a9a; }
.gutter { width: 15px; flex: none; display: flex; flex-direction: column; }
.gutter button { height: 15px; }
.gutter h2 { flex: 1; writing-mode: vertical-rl; rotate: 180deg; color: #54606c; background: linear-gradient(#bccbdb, #dae6f2); margin: 0 1px; padding-top: 2px; }
.termbody { flex: 1; min-width: 0; }
.orderbox { display: flex; border-left: 1px solid #a0a0a0; border-top: 1px solid #a0a0a0; height: 185px; overflow: hidden; }
.orders { flex: 1; min-width: 0; border-collapse: collapse; table-layout: fixed; background: #fff; }
.c1 { width: 129px; } .c2 { width: 183px; } .c3 { width: 91px; } .c4 { width: 71px; } .c5 { width: 101px; }
.orders th { height: 25px; text-align: right; padding: 0 6px; font-weight: normal; background: linear-gradient(#fff 55%, #f1f3f5); border-right: 1px solid #e0e4e8; border-bottom: 1px solid #c8c8c8; }
.orders th:first-child { text-align: left; }
.orders th:last-child { text-align: start; }
.sorted span { margin-left: 14px; font-size: 9px; }
.orders td { height: 20px; padding: 0 3px; text-align: right; border-right: 1px solid #c8c8c8; border-bottom: 1px solid #c8c8c8; }
.orders tr:nth-child(even) td { background: #ebebeb; }
.orders tbody .sel td { background: #39f; color: #fff; }
.orders td:first-child { text-align: left; }
.orders td svg { display: inline-block; width: 15px; height: 15px; margin-right: 6px; vertical-align: -4px; }
.orders td button { width: 11px; margin: 0 2px 0 8px; color: #999; }
.orders td button svg { width: 8px; height: 8px; margin: 0; vertical-align: -1px; }

.status { display: flex; height: 22px; align-items: center; border-top: 1px solid #fff; }
.help { margin-right: auto; padding-left: 2px; }
.status span:not(.help) { border-left: 1px solid #a0a0a0; padding-left: 5px; height: 16px; line-height: 16px; white-space: nowrap; }
.s-prof { width: 116px; } .s-time { width: 103px; } .s-o { width: 70px; } .s-l { width: 68px; } .s-v { width: 66px; }
.s-net { width: 143px; display: flex; align-items: center; gap: 28px; }
.s-net svg { width: 24px; height: 13px; }
.size { width: 16px; height: 18px; align-self: flex-end; }
.taskbar { flex: 1; min-height: 7px; max-height: 40px; overflow: hidden; border-top: 1px solid #26303c; background: linear-gradient(90deg, #758fae, #7f98b6 15%, #a6bfdc 19%, #a6bfdc 80%, #6f89a8 88%, #93a9c4); }
.taskbar svg { width: 100%; }
```

FILE: chart.js
```javascript
const svg = document.getElementById('chart');
const NS = 'http://www.w3.org/2000/svg';
function add(tag, attrs, text) {
  const el = document.createElementNS(NS, tag);
  for (const k in attrs) el.setAttribute(k, attrs[k]);
  if (text !== undefined) el.textContent = text;
  svg.appendChild(el);
}

// [y, order label]
const levels = [
  [115, '#88366244 buy stop 0.10'], [139, '#88366242 buy stop 0.10'], [163, '#88366238 buy stop 0.10'],
  [187, '#88366235 buy stop 0.10'], [212, '#88366232 buy stop 0.10'], [236, '#88366230 buy stop 0.10'],
  [260, '#88366226 buy stop 0.10'], [284, '#88366219 buy 0.10'], [308, '#88366217 buy 0.10'],
  [332, '#88366731 buy stop 0.10'], [357, '#88366729 buy stop 0.10'], [381, '#88366762 buy stop 0.10'],
  [396, '#88366314 sell 0.10'], [420, '#88366422 sell 0.10'], [445, '#88366732 sell 0.10']
];
// [high, body top, body bottom, low, bearish]
const candles = [
  [142, 146, 178, 206, 1], [180, 180, 204, 235, 1], [180, 180, 202, 220, 0], [160, 180, 202, 204, 1],
  [183, 196, 201, 201, 0], [182, 197, 201, 208, 1], [199, 199, 286, 302, 1], [259, 286, 297, 308, 1],
  [284, 297, 297, 311, 0], [274, 280, 296, 302, 0], [281, 281, 309, 328, 1], [303, 307, 307, 328, 0],
  [307, 310, 333, 356, 1], [324, 331, 403, 407, 1], [386, 399, 401, 440, 1], [398, 398, 436, 442, 1],
  [399, 404, 435, 437, 0], [375, 404, 405, 420, 0], [390, 401, 404, 446, 0], [354, 359, 399, 399, 0],
  [325, 359, 377, 382, 1], [358, 361, 379, 408, 0], [326, 351, 361, 366, 0], [304, 310, 352, 361, 0],
  [304, 310, 351, 351, 1], [330, 351, 375, 401, 1], [335, 351, 375, 397, 0], [352, 352, 383, 418, 1],
  [364, 383, 407, 407, 1], [407, 407, 451, 451, 1], [419, 420, 452, 452, 0]
];
const times = ['2014', '13:35', '13:37', '13:39', '13:42', '13:44', '13:46', '13:48', '13:50', '13:52', '13:54', '13:56', '13:58', '14:00', '14:02', '14:04'];
const prices = ['169.595', '169.525', '169.455', '169.385', '169.315', '169.245', '169.175', '169.105', '169.035', '168.965', '168.895'];

add('path', { d: 'M250.500 106v375', stroke: '#666' });
add('clipPath', { id: 'plot' });
const frame = document.createElementNS(NS, 'rect');
Object.entries({ x: 254, y: 109, width: 1075, height: 354 }).forEach(([k, v]) => frame.setAttribute(k, v));
svg.lastChild.appendChild(frame);

levels.forEach(([y, label]) => {
  add('text', { x: 261, y: y - 2, 'clip-path': 'url(#plot)' }, label);
  add('path', { class: 'level', d: `M${y === 115 ? 485 : 254} ${y + 0.5}H1328` });
});
add('path', { class: 'ask', d: 'M346 395.500H1329' });

add('path', { class: 'candle', fill: '#000', d: 'M254.500 128V158M254 147.500h12v10h-12' });
candles.forEach(([h, t, b, l, bear], i) => {
  const x = 286 + i * 32;
  add('path', { class: 'candle', d: `M${x + 0.5} ${h}V${t}M${x + 0.5} ${b}V${l}` });
  if (b - t < 2) add('path', { class: 'candle', 'stroke-width': b - t + 1, d: `M${x - 12} ${(t + b + 1) / 2}h25` });
  else add('rect', { class: 'candle', x: x - 11.5, y: t + 0.5, width: 24, height: b - t, fill: bear ? '#fff' : '#000' });
  if (b === t) add('path', { class: 'candle', d: `M${x + 0.5} ${h}V${l}` });
});

function arrow(x, y, fill) {
  add('path', { class: 'arrow', d: `M${x - 3.5} ${y - 1.5}h3v-3l5 5-5 5v-3h-3z`, fill, stroke: '#fff' });
}
levels.forEach(([y]) => arrow(827, y, y < 390 ? '#00f' : '#f00'));
[[955, 357], [1211, 332], [1211, 357], [1211, 381]].forEach(([x, y]) => arrow(x, y, '#00f'));
[[891, 396], [955, 420], [1211, 445]].forEach(([x, y]) => arrow(x, y, '#f00'));

add('path', { class: 'axis', d: 'M1329.500 108.500H253.500V463.500H1329.500z' });
times.forEach((t, i) => {
  add('path', { class: 'axis', d: `M${254.5 + i * 64} 463v4` });
  add('text', { x: 253 + i * 64, y: 475 }, '29 Jan ' + t);
});
prices.forEach((p, i) => {
  const y = Math.round(121 + i * 33.9);
  add('path', { class: 'axis', d: `M1330 ${y + 0.5}h2` });
  add('text', { x: 1336, y: y + 4 }, p);
});
add('rect', { x: 1331, y: 389, width: 41, height: 11, fill: '#f00' });
add('text', { x: 1336, y: 398, class: 'dark' }, '169.029');
add('rect', { x: 1331, y: 414, width: 41, height: 11, fill: '#fff' });
add('text', { x: 1336, y: 423, class: 'dark' }, '168.977');

add('path', { d: 'M257 115h8l-4 4z' });
add('text', { x: 269, y: 120 }, 'GBPJPYpro,M1\u00a0 168.912 168.979 168.912 168.977');
add('text', { x: 258, y: 133 }, 'Programmed By Eslam El Awamy');
add('text', { x: 1311, y: 121, 'text-anchor': 'end' }, 'Al Malky Pending EA V 1.02');
add('circle', { cx: 1318.5, cy: 118.5, r: 5, class: 'axis' });
add('path', { class: 'axis arrow', d: 'M1316.500 116v2M1320.500 116v2M1315.500 120q3 3 6 0' });
```
